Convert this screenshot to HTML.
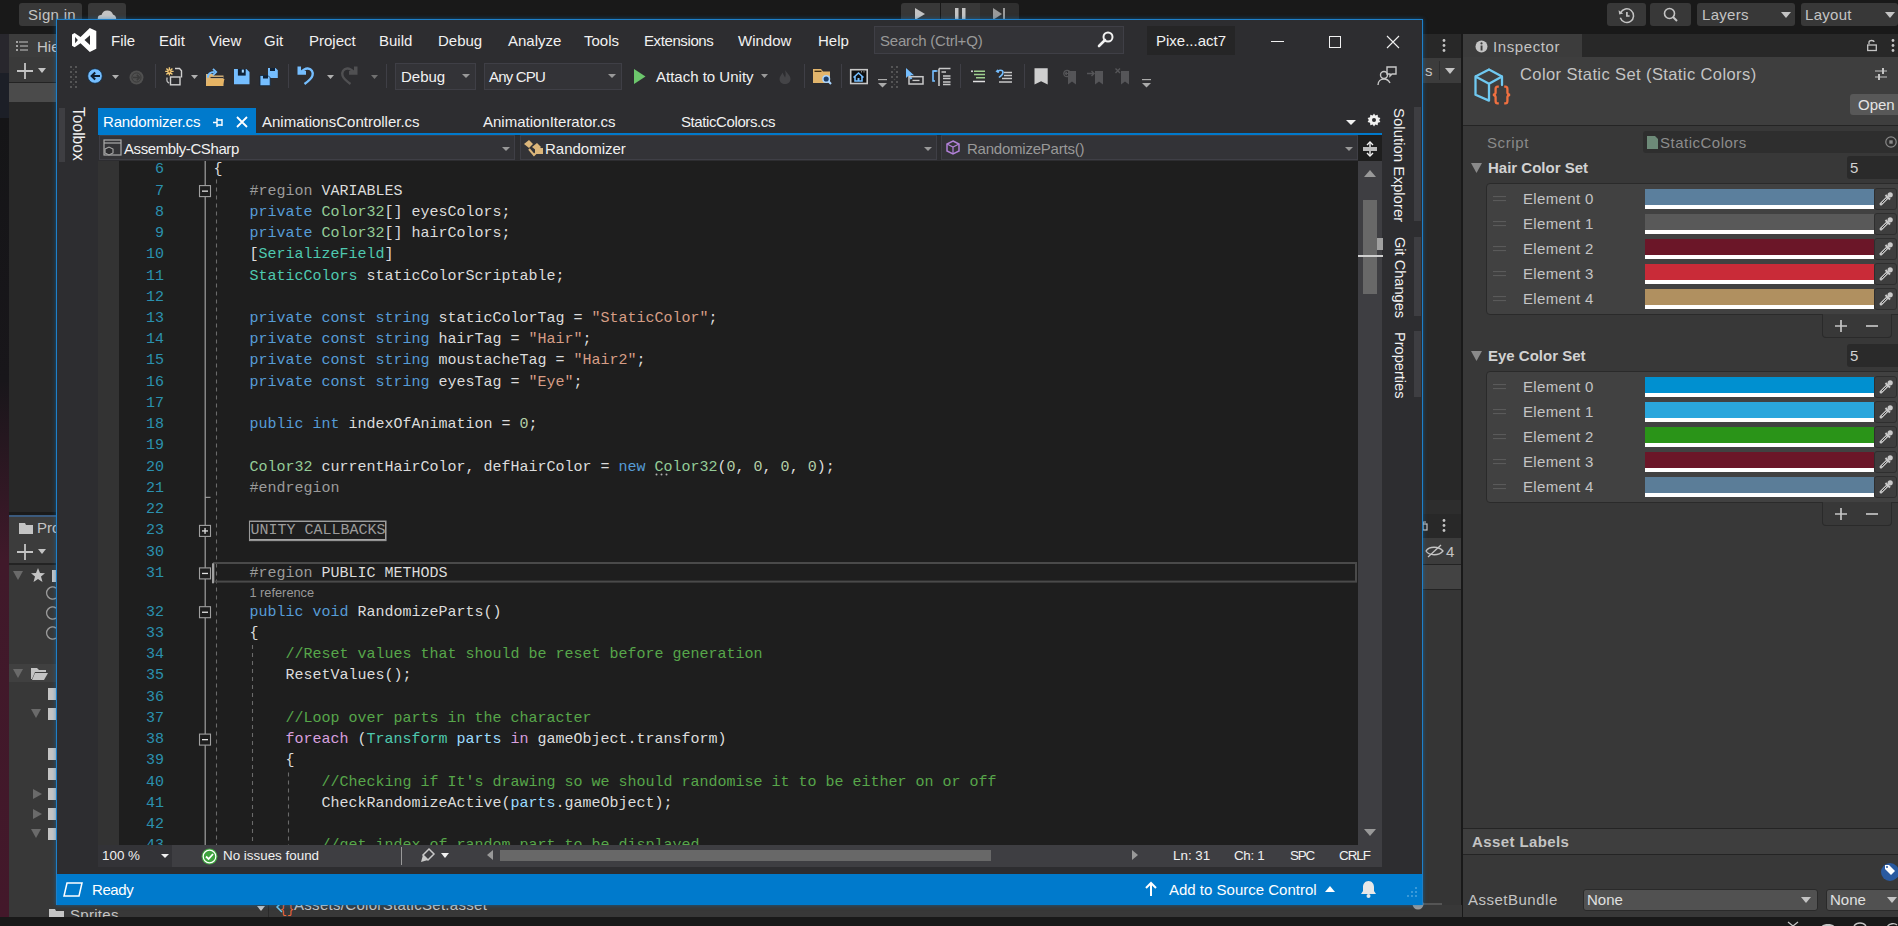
<!DOCTYPE html>
<html><head><meta charset="utf-8">
<style>
*{box-sizing:border-box;margin:0;padding:0}
html,body{width:1898px;height:926px;overflow:hidden;background:#191919;font-family:"Liberation Sans",sans-serif;position:relative}
.abs{position:absolute}
svg.abs{overflow:visible}
.t{position:absolute;white-space:pre;line-height:1.15}
.ln{position:absolute;left:0;width:66px;text-align:right;font-family:"Liberation Mono",monospace;font-size:15px;line-height:21px;color:#2b91af;white-space:pre}
.cl{position:absolute;left:115.4px;font-family:"Liberation Mono",monospace;font-size:15px;line-height:21px;color:#dcdcdc;white-space:pre}
.lens{position:absolute;font-size:12.8px;line-height:17px;color:#999;}
.coll{border:1px solid #a5a5a5;color:#9b9b9b;}
</style></head><body>
<div class="abs" style="left:0px;top:0px;width:1898px;height:34px;background:#191919;"></div><div class="abs" style="left:19px;top:3px;width:63px;height:23px;background:#383838;border-radius:3px"></div><div class="t" style="left:28px;top:6px;font-size:15px;color:#c4c4c4;letter-spacing:0.3px">Sign in</div><div class="abs" style="left:88px;top:3px;width:38px;height:23px;background:#383838;border-radius:3px"></div><svg class="abs" style="left:98px;top:8px" width="19" height="14" viewBox="0 0 19 14"><path d="M3 14 A3.5 3.5 0 0 1 3.5 7 A6 6 0 0 1 15 6.5 A4 4 0 0 1 16 14Z" fill="#c4c4c4"/></svg><div class="abs" style="left:901px;top:3px;width:39px;height:23px;background:#383838;border-radius:3px 0 0 3px"></div><div class="abs" style="left:941px;top:3px;width:39px;height:23px;background:#383838;"></div><div class="abs" style="left:980px;top:3px;width:39px;height:23px;background:#2f2f2f;border-radius:0 3px 3px 0"></div><svg class="abs" style="left:915px;top:8px" width="11" height="12" viewBox="0 0 11 12"><path d="M0 0L10 6L0 12Z" fill="#c4c4c4"/></svg><svg class="abs" style="left:955px;top:8px" width="11" height="12" viewBox="0 0 11 12"><rect x="0" y="0" width="3.5" height="12" fill="#c4c4c4"/><rect x="7" y="0" width="3.5" height="12" fill="#c4c4c4"/></svg><svg class="abs" style="left:993px;top:8px" width="13" height="12" viewBox="0 0 13 12"><path d="M0 0L9 6L0 12Z" fill="#9a9a9a"/><rect x="10" y="0" width="2" height="12" fill="#9a9a9a"/></svg><div class="abs" style="left:1607px;top:3px;width:39px;height:23px;background:#383838;border-radius:3px"></div><svg class="abs" style="left:1618px;top:7px" width="17" height="17" viewBox="0 0 17 17"><path d="M2.6 5.8A6.8 6.8 0 1 1 2.3 10.8" fill="none" stroke="#c4c4c4" stroke-width="1.5"/><path d="M0.6 3.2L1.2 7.6L5.2 6.6Z" fill="#c4c4c4"/><path d="M8.9 5V9H11.6" fill="none" stroke="#c4c4c4" stroke-width="1.7"/></svg><div class="abs" style="left:1650px;top:3px;width:41px;height:23px;background:#383838;border-radius:3px"></div><svg class="abs" style="left:1663px;top:7px" width="16" height="16" viewBox="0 0 16 16"><circle cx="6.5" cy="6.5" r="5" fill="none" stroke="#c4c4c4" stroke-width="1.6"/><path d="M10 10L14 14" stroke="#c4c4c4" stroke-width="2"/></svg><div class="abs" style="left:1697px;top:3px;width:98px;height:23px;background:#383838;border-radius:3px"></div><div class="t" style="left:1702px;top:6px;font-size:15px;color:#c4c4c4;letter-spacing:0.3px">Layers</div><svg class="abs" style="left:1781.0px;top:12.0px" width="10" height="6" viewBox="0 0 10 6"><path d="M0 0H10L5.0 6Z" fill="#c4c4c4"/></svg><div class="abs" style="left:1801px;top:3px;width:97px;height:23px;background:#383838;border-radius:3px"></div><div class="t" style="left:1805px;top:6px;font-size:15px;color:#c4c4c4;letter-spacing:0.3px">Layout</div><svg class="abs" style="left:1885.0px;top:12.0px" width="10" height="6" viewBox="0 0 10 6"><path d="M0 0H10L5.0 6Z" fill="#c4c4c4"/></svg><div class="abs" style="left:0px;top:34px;width:9px;height:883px;background:linear-gradient(#28272d 0px,#28272d 39px,#1c1f27 39px,#1c1f27 84px,#151517 84px,#18161a 346px,#40192a 526px,#43182a 883px);"></div><div class="abs" style="left:9px;top:34px;width:47px;height:481px;background:#282828;"></div><div class="abs" style="left:9px;top:34px;width:47px;height:23px;background:#3c3c3c;"></div><div class="abs" style="left:9px;top:57px;width:47px;height:26px;background:#3a3a3a;border-bottom:1px solid #232323"></div><div class="abs" style="left:9px;top:83px;width:47px;height:19px;background:#4b4b4b;"></div><div class="abs" style="left:9px;top:512px;width:47px;height:405px;background:#383838;"></div><div class="abs" style="left:9px;top:512px;width:47px;height:3px;background:#1a1a1a;"></div><div class="abs" style="left:9px;top:515px;width:47px;height:2px;background:#3b5a7d;"></div><div class="abs" style="left:9px;top:517px;width:47px;height:23px;background:#3c3c3c;"></div><div class="abs" style="left:9px;top:540px;width:47px;height:25px;background:#3c3c3c;border-bottom:2px solid #232323"></div><div class="abs" style="left:9px;top:664px;width:47px;height:18px;background:#404040;"></div><div class="abs" style="left:1423px;top:34px;width:39px;height:883px;background:#353535;"></div><div class="abs" style="left:1423px;top:34px;width:39px;height:24px;background:#282828;"></div><div class="abs" style="left:1423px;top:58px;width:39px;height:25px;background:#3c3c3c;"></div><div class="abs" style="left:1423px;top:83px;width:39px;height:431px;background:#282828;"></div><div class="abs" style="left:1423px;top:500px;width:39px;height:14px;background:#2d2d2d;"></div><div class="abs" style="left:1423px;top:514px;width:39px;height:24px;background:#282828;"></div><div class="abs" style="left:1423px;top:538px;width:39px;height:26px;background:#3c3c3c;"></div><div class="abs" style="left:1423px;top:564px;width:39px;height:26px;background:#434343;border-top:1px solid #232323;border-bottom:1px solid #232323"></div><div class="abs" style="left:1461px;top:34px;width:2px;height:883px;background:#191919;"></div><div class="abs" style="left:1463px;top:34px;width:435px;height:883px;background:#383838;"></div><div class="abs" style="left:1463px;top:34px;width:435px;height:23px;background:#282828;"></div><div class="abs" style="left:1463px;top:34px;width:119px;height:23px;background:#3c3c3c;"></div><div class="abs" style="left:1463px;top:57px;width:435px;height:69px;background:#3e3e3e;border-bottom:1px solid #242424"></div><div class="abs" style="left:1463px;top:828px;width:435px;height:27px;background:#3e3e3e;border-top:1px solid #242424;border-bottom:1px solid #242424"></div><div class="abs" style="left:9px;top:905px;width:1453px;height:12px;background:#383838;"></div><div class="abs" style="left:0px;top:917px;width:1898px;height:9px;background:#191919;"></div><div class="abs" style="left:1418px;top:903px;width:24px;height:2px;background:#555555;"></div><svg class="abs" style="left:1412px;top:898px" width="12" height="12" viewBox="0 0 12 12"><circle cx="6" cy="6" r="5.5" fill="#9a9a9a"/></svg><svg class="abs" style="left:257.0px;top:905.5px" width="8" height="5" viewBox="0 0 8 5"><path d="M0 0H8L4.0 5Z" fill="#c4c4c4"/></svg><div class="abs" style="left:268px;top:905px;width:1px;height:12px;background:#2a2a2a;"></div><svg class="abs" style="left:276px;top:900px" width="16" height="14" viewBox="0 0 16 14"><path d="M6 2L1 7L6 12" fill="none" stroke="#6fc8f0" stroke-width="1.5"/><text x="11" y="13" font-family="Liberation Mono" font-size="12" fill="#f0683a" text-anchor="middle">{}</text></svg><div class="t" style="left:294px;top:896px;font-size:15px;color:#c4c4c4;letter-spacing:0.3px">Assets/ColorStaticSet.asset</div><svg class="abs" style="left:49px;top:908px" width="15" height="12" viewBox="0 0 15 12"><path d="M0 1H6L7 3H15V12H0Z" fill="#c4c4c4"/></svg><div class="t" style="left:70px;top:906px;font-size:15px;color:#c4c4c4;letter-spacing:0.3px">Sprites</div><svg class="abs" style="left:16px;top:41px" width="12" height="10" viewBox="0 0 12 10"><circle cx="1" cy="1" r="1" fill="#c4c4c4"/><path d="M3 1H12M4 5H12M4 9H12" stroke="#c4c4c4" stroke-width="1.2"/><circle cx="1" cy="5" r="1" fill="#c4c4c4"/><circle cx="1" cy="9" r="1" fill="#c4c4c4"/></svg><div class="t" style="left:37px;top:38px;font-size:15px;color:#c4c4c4;">Hie</div><svg class="abs" style="left:17px;top:63px" width="16" height="16" viewBox="0 0 16 16"><path d="M8 0V16M0 8H16" stroke="#c4c4c4" stroke-width="1.8"/></svg><svg class="abs" style="left:38.0px;top:67.5px" width="8" height="5" viewBox="0 0 8 5"><path d="M0 0H8L4.0 5Z" fill="#c4c4c4"/></svg><svg class="abs" style="left:19px;top:522px" width="14" height="12" viewBox="0 0 14 12"><path d="M0 1H6L7 3H14V12H0Z" fill="#c4c4c4"/></svg><div class="t" style="left:37px;top:519px;font-size:15px;color:#c4c4c4;">Pro</div><svg class="abs" style="left:17px;top:544px" width="16" height="16" viewBox="0 0 16 16"><path d="M8 0V16M0 8H16" stroke="#c4c4c4" stroke-width="1.8"/></svg><svg class="abs" style="left:38.0px;top:548.5px" width="8" height="5" viewBox="0 0 8 5"><path d="M0 0H8L4.0 5Z" fill="#c4c4c4"/></svg><svg class="abs" style="left:13px;top:571px" width="10" height="9" viewBox="0 0 10 9"><path d="M0 0H10L5 9Z" fill="#6a6a6a"/></svg><svg class="abs" style="left:31px;top:568px" width="14" height="14" viewBox="0 0 14 14"><path d="M7 0L9 5L14 5.3L10 8.5L11.5 14L7 11L2.5 14L4 8.5L0 5.3L5 5Z" fill="#c4c4c4"/></svg><div class="abs" style="left:52px;top:570px;width:4px;height:12px;background:#c4c4c4;"></div><div class="t" style="left:47px;top:585px;font-size:15px;color:#f1f1f1;"></div><svg class="abs" style="left:47px;top:586px" width="10" height="14" viewBox="0 0 10 14"><path d="M9 2A6 6 0 1 0 9 12" fill="none" stroke="#9a9a9a" stroke-width="1.5"/></svg><div class="t" style="left:47px;top:585px;font-size:15px;color:#f1f1f1;"></div><svg class="abs" style="left:47px;top:606px" width="10" height="14" viewBox="0 0 10 14"><path d="M9 2A6 6 0 1 0 9 12" fill="none" stroke="#9a9a9a" stroke-width="1.5"/></svg><div class="t" style="left:47px;top:585px;font-size:15px;color:#f1f1f1;"></div><svg class="abs" style="left:47px;top:626px" width="10" height="14" viewBox="0 0 10 14"><path d="M9 2A6 6 0 1 0 9 12" fill="none" stroke="#9a9a9a" stroke-width="1.5"/></svg><svg class="abs" style="left:13px;top:669px" width="10" height="9" viewBox="0 0 10 9"><path d="M0 0H10L5 9Z" fill="#6a6a6a"/></svg><svg class="abs" style="left:31px;top:667px" width="17" height="13" viewBox="0 0 17 13"><path d="M0 1H6L8 3H15V5H4L1 12H0Z" fill="#c4c4c4"/><path d="M4 6H17L13 13H1Z" fill="#c4c4c4"/></svg><div class="abs" style="left:48px;top:688px;width:8px;height:12px;background:#c4c4c4;"></div><div class="abs" style="left:48px;top:748px;width:8px;height:12px;background:#c4c4c4;"></div><div class="abs" style="left:48px;top:768px;width:8px;height:12px;background:#c4c4c4;"></div><div class="abs" style="left:48px;top:788px;width:8px;height:12px;background:#c4c4c4;"></div><div class="abs" style="left:48px;top:808px;width:8px;height:12px;background:#c4c4c4;"></div><svg class="abs" style="left:31px;top:709px" width="10" height="9" viewBox="0 0 10 9"><path d="M0 0H10L5 9Z" fill="#6a6a6a"/></svg><div class="abs" style="left:48px;top:708px;width:8px;height:12px;background:#c4c4c4;"></div><svg class="abs" style="left:33px;top:789px" width="9" height="10" viewBox="0 0 9 10"><path d="M0 0L9 5L0 10Z" fill="#6a6a6a"/></svg><svg class="abs" style="left:33px;top:809px" width="9" height="10" viewBox="0 0 9 10"><path d="M0 0L9 5L0 10Z" fill="#6a6a6a"/></svg><svg class="abs" style="left:31px;top:829px" width="10" height="9" viewBox="0 0 10 9"><path d="M0 0H10L5 9Z" fill="#6a6a6a"/></svg><div class="abs" style="left:48px;top:828px;width:8px;height:12px;background:#c4c4c4;"></div><svg class="abs" style="left:1442px;top:39px" width="4" height="13" viewBox="0 0 4 13"><circle cx="2" cy="1.5" r="1.4" fill="#c4c4c4"/><circle cx="2" cy="6.5" r="1.4" fill="#c4c4c4"/><circle cx="2" cy="11.5" r="1.4" fill="#c4c4c4"/></svg><div class="t" style="left:1425px;top:62px;font-size:15px;color:#c4c4c4;">s</div><div class="abs" style="left:1439px;top:61px;width:1px;height:19px;background:#2e2e2e;"></div><svg class="abs" style="left:1445.0px;top:68.0px" width="10" height="6" viewBox="0 0 10 6"><path d="M0 0H10L5.0 6Z" fill="#c4c4c4"/></svg><svg class="abs" style="left:1442px;top:519px" width="4" height="13" viewBox="0 0 4 13"><circle cx="2" cy="1.5" r="1.4" fill="#c4c4c4"/><circle cx="2" cy="6.5" r="1.4" fill="#c4c4c4"/><circle cx="2" cy="11.5" r="1.4" fill="#c4c4c4"/></svg><svg class="abs" style="left:1423px;top:520px" width="5" height="10" viewBox="0 0 5 10"><rect x="0" y="4" width="4" height="6" fill="none" stroke="#c4c4c4" stroke-width="1.2"/><path d="M0 4V2H3" fill="none" stroke="#c4c4c4" stroke-width="1.2"/></svg><svg class="abs" style="left:1425px;top:544px" width="19" height="14" viewBox="0 0 19 14"><path d="M1 7C4 2 14 2 18 7C14 12 4 12 1 7Z" fill="none" stroke="#c4c4c4" stroke-width="1.3"/><path d="M3 13L16 1" stroke="#c4c4c4" stroke-width="1.3"/></svg><div class="t" style="left:1446px;top:543px;font-size:15px;color:#c4c4c4;">4</div><div class="abs" style="left:56px;top:19px;width:1367px;height:886px;background:#2d2d30;border:1px solid #1f7fc8;box-shadow:0 0 4px rgba(0,122,204,0.55)"></div><svg class="abs" style="left:72px;top:28px" width="25" height="25" viewBox="0 0 25 25"><path fill-rule="evenodd" fill="#fff" d="M17.8 0L24.3 2.9V20.8L17.8 24.1L8.5 15.3L2.6 19.3L0 17.8V6.4L2.6 5L8.5 9ZM18 7.2L12.5 11.9L18 17.1ZM3.1 9L5.9 12L3.1 15.3Z"/></svg><div class="t" style="left:111px;top:32px;font-size:15px;color:#f1f1f1;">File</div><div class="t" style="left:159px;top:32px;font-size:15px;color:#f1f1f1;">Edit</div><div class="t" style="left:209px;top:32px;font-size:15px;color:#f1f1f1;">View</div><div class="t" style="left:264px;top:32px;font-size:15px;color:#f1f1f1;">Git</div><div class="t" style="left:309px;top:32px;font-size:15px;color:#f1f1f1;">Project</div><div class="t" style="left:379px;top:32px;font-size:15px;color:#f1f1f1;">Build</div><div class="t" style="left:438px;top:32px;font-size:15px;color:#f1f1f1;">Debug</div><div class="t" style="left:508px;top:32px;font-size:15px;color:#f1f1f1;">Analyze</div><div class="t" style="left:584px;top:32px;font-size:15px;color:#f1f1f1;">Tools</div><div class="t" style="left:644px;top:32px;font-size:15px;color:#f1f1f1;letter-spacing:-0.4px">Extensions</div><div class="t" style="left:738px;top:32px;font-size:15px;color:#f1f1f1;">Window</div><div class="t" style="left:818px;top:32px;font-size:15px;color:#f1f1f1;">Help</div><div class="abs" style="left:874px;top:26px;width:250px;height:28px;background:#333337;border:1px solid #3f3f46"></div><div class="t" style="left:880px;top:32px;font-size:15px;color:#999999;letter-spacing:-0.2px">Search (Ctrl+Q)</div><svg class="abs" style="left:1097px;top:31px" width="17" height="17" viewBox="0 0 17 17"><circle cx="11" cy="6" r="4.5" fill="none" stroke="#f1f1f1" stroke-width="2"/><path d="M8 9L2 15" stroke="#f1f1f1" stroke-width="2.6" stroke-linecap="round"/></svg><div class="abs" style="left:1147px;top:26px;width:88px;height:29px;background:#252526;"></div><div class="t" style="left:1156px;top:32px;font-size:15px;color:#f1f1f1;">Pixe...act7</div><div class="abs" style="left:1271px;top:41px;width:13px;height:1px;background:#f1f1f1;"></div><div class="abs" style="left:1329px;top:36px;width:12px;height:12px;background:transparent;border:1px solid #f1f1f1"></div><svg class="abs" style="left:1387px;top:36px" width="12" height="12" viewBox="0 0 12 12"><path d="M0 0L12 12M12 0L0 12" stroke="#f1f1f1" stroke-width="1.1"/></svg><svg class="abs" style="left:71.4px;top:66.5px" width="6" height="21" viewBox="0 0 6 21"><circle cx="0" cy="0" r="0.9" fill="#6a6a6a"/><circle cx="5" cy="0" r="0.9" fill="#6a6a6a"/><circle cx="0" cy="5" r="0.9" fill="#6a6a6a"/><circle cx="5" cy="5" r="0.9" fill="#6a6a6a"/><circle cx="0" cy="10" r="0.9" fill="#6a6a6a"/><circle cx="5" cy="10" r="0.9" fill="#6a6a6a"/><circle cx="0" cy="15" r="0.9" fill="#6a6a6a"/><circle cx="5" cy="15" r="0.9" fill="#6a6a6a"/><circle cx="0" cy="20" r="0.9" fill="#6a6a6a"/><circle cx="5" cy="20" r="0.9" fill="#6a6a6a"/><circle cx="2.5" cy="2.5" r="0.8" fill="#4a4a4a"/><circle cx="2.5" cy="7.5" r="0.8" fill="#4a4a4a"/><circle cx="2.5" cy="12.5" r="0.8" fill="#4a4a4a"/><circle cx="2.5" cy="17.5" r="0.8" fill="#4a4a4a"/></svg><svg class="abs" style="left:87px;top:68px" width="16" height="16" viewBox="0 0 16 16"><circle cx="8" cy="8" r="7.3" fill="#75beff" stroke="#0b2a45" stroke-width="0.8"/><path d="M13 8H5M8.2 4.6L4.6 8L8.2 11.4" fill="none" stroke="#0f1e2e" stroke-width="2"/></svg><svg class="abs" style="left:112.0px;top:74.7px" width="7" height="4" viewBox="0 0 7 4"><path d="M0 0H7L3.5 4Z" fill="#b0b0b0"/></svg><svg class="abs" style="left:128.5px;top:69.5px" width="15" height="15" viewBox="0 0 15 15"><circle cx="7.5" cy="7.5" r="7" fill="#505050"/><circle cx="7.5" cy="7.5" r="4.6" fill="none" stroke="#3a3a3a" stroke-width="1"/><path d="M4 7.5H10.5M7.8 4.8L10.5 7.5L7.8 10.2" fill="none" stroke="#3a3a3a" stroke-width="1.6"/></svg><div class="abs" style="left:155px;top:64px;width:1px;height:24px;background:#3f3f46;"></div><svg class="abs" style="left:164px;top:66px" width="20" height="20" viewBox="0 0 20 20"><path d="M5.4 1.2V9.6M1.2 5.4H9.6M2.4 2.4L8.4 8.4M8.4 2.4L2.4 8.4" stroke="#f0c878" stroke-width="1.4"/><circle cx="5.4" cy="5.4" r="1" fill="#7a4a10"/><path d="M11 2.5H15.5L17.5 4.8V11.5" fill="none" stroke="#d0d0d0" stroke-width="1.4"/><rect x="6.5" y="11" width="9.5" height="7.8" fill="#2d2d30" stroke="#d0d0d0" stroke-width="1.4"/><path d="M3.2 11.5C2.3 14 3 16.5 5.2 17" fill="none" stroke="#b8b8b8" stroke-width="1.4"/></svg><svg class="abs" style="left:191.0px;top:74.8px" width="7" height="4" viewBox="0 0 7 4"><path d="M0 0H7L3.5 4Z" fill="#b0b0b0"/></svg><svg class="abs" style="left:204px;top:66px" width="22" height="22" viewBox="0 0 22 22"><path d="M2 8H8.5L10 9.5H19.5V20H2Z" fill="#dcb67a"/><path d="M6.5 11.5H19.5" stroke="#2d2d30" stroke-width="1.2"/><path d="M2 20L4.8 13H20.5L18.5 20Z" fill="#e6b464"/><path d="M3.8 11.8C3.8 7.5 6.5 6 10.5 6" fill="none" stroke="#75beff" stroke-width="1.8"/><path d="M9 2.8L12.2 6L9 9.2" fill="none" stroke="#75beff" stroke-width="1.8"/></svg><svg class="abs" style="left:234px;top:69px" width="16" height="16" viewBox="0 0 16 16"><path d="M0 0H12.4L15.5 3V15.3H0Z" fill="#75beff"/><rect x="3.9" y="0" width="7.8" height="6.6" fill="#102236"/><rect x="7.8" y="0.6" width="2.1" height="3" fill="#a8d8ff"/></svg><svg class="abs" style="left:260px;top:68px" width="18" height="18" viewBox="0 0 18 18"><path d="M8 0H15.5L17.8 2.3V10H8Z" fill="#75beff"/><rect x="10" y="0" width="5" height="3" fill="#102236"/><path d="M0 7.5H8L10.2 9.8V17.7H0Z" fill="#75beff" stroke="#102236" stroke-width="0.8"/><rect x="3" y="7.5" width="5" height="3" fill="#102236"/></svg><div class="abs" style="left:288px;top:64px;width:1px;height:24px;background:#3f3f46;"></div><svg class="abs" style="left:296px;top:66px" width="20" height="20" viewBox="0 0 20 20"><path d="M4 7C7 4 9.5 2 12 2.5C15.5 3 17.5 6 16.5 9.5C15.5 13 12 15.5 8.5 18" fill="none" stroke="#75beff" stroke-width="2.4"/><path d="M1.5 0.5H5V5H10V8.8H1.5Z" fill="#75beff"/></svg><svg class="abs" style="left:326.5px;top:74.8px" width="7" height="4" viewBox="0 0 7 4"><path d="M0 0H7L3.5 4Z" fill="#b0b0b0"/></svg><svg class="abs" style="left:341px;top:66px" width="18" height="20" viewBox="0 0 18 20"><path d="M14 7C11 4 8.5 2 6 2.5C2.5 3 0.5 6 1.5 9.5C2.5 13 6 15.5 9.5 18" fill="none" stroke="#505052" stroke-width="2.4"/><path d="M16.5 0.5H13V5H8V8.8H16.5Z" fill="#505052"/></svg><svg class="abs" style="left:370.5px;top:74.8px" width="7" height="4" viewBox="0 0 7 4"><path d="M0 0H7L3.5 4Z" fill="#707070"/></svg><div class="abs" style="left:386px;top:64px;width:1px;height:24px;background:#3f3f46;"></div><div class="abs" style="left:395px;top:63px;width:81px;height:27px;background:#333337;border:1px solid #3f3f46"></div><div class="t" style="left:401px;top:68px;font-size:15px;color:#f1f1f1;">Debug</div><svg class="abs" style="left:462.0px;top:74.0px" width="8" height="4" viewBox="0 0 8 4"><path d="M0 0H8L4.0 4Z" fill="#999"/></svg><div class="abs" style="left:484px;top:63px;width:138px;height:27px;background:#333337;border:1px solid #3f3f46"></div><div class="t" style="left:489px;top:68px;font-size:15px;color:#f1f1f1;letter-spacing:-0.8px">Any CPU</div><svg class="abs" style="left:608.0px;top:74.0px" width="8" height="4" viewBox="0 0 8 4"><path d="M0 0H8L4.0 4Z" fill="#999"/></svg><svg class="abs" style="left:634px;top:69px" width="12" height="15" viewBox="0 0 12 15"><path d="M0 0L11.5 7.5L0 15Z" fill="#6cc66c"/></svg><div class="t" style="left:656px;top:68px;font-size:15px;color:#f1f1f1;">Attach to Unity</div><svg class="abs" style="left:760.5px;top:74.0px" width="7" height="4" viewBox="0 0 7 4"><path d="M0 0H7L3.5 4Z" fill="#999"/></svg><svg class="abs" style="left:779px;top:70px" width="12" height="14" viewBox="0 0 12 14"><path d="M6 0C7.5 3 11.5 5 11.5 9C11.5 12 9 14 6 14C3 14 0.5 12 0.5 9C0.5 6.5 2.5 5 3.5 2.5C4.5 5 5.5 6 6 7.5C7 6 6.8 3 6 0Z" fill="#444447"/></svg><div class="abs" style="left:804px;top:64px;width:1px;height:24px;background:#3f3f46;"></div><svg class="abs" style="left:812px;top:68px" width="20" height="17" viewBox="0 0 20 17"><path d="M1 1H9L11 3.5H18V15H1Z" fill="#e2b56c"/><path d="M2.5 3.3H9.5" stroke="#3a2a10" stroke-width="1.3"/><circle cx="14.2" cy="11" r="3.3" fill="#1c3c66" stroke="#a8d4ff" stroke-width="1.5"/><path d="M16.5 13.3L19 16" stroke="#a8d4ff" stroke-width="2"/></svg><div class="abs" style="left:841px;top:64px;width:1px;height:24px;background:#3f3f46;"></div><svg class="abs" style="left:849px;top:68px" width="20" height="17" viewBox="0 0 20 17"><rect x="1.7" y="1.7" width="16.5" height="13.8" fill="#101010" stroke="#c8c8c8" stroke-width="1.6"/><path d="M4.5 9.5L9.5 5L14.5 9.5M6 8.5V13H13V8.5" fill="none" stroke="#75beff" stroke-width="1.6"/><rect x="8.5" y="10" width="2" height="3" fill="#75beff"/><circle cx="12.5" cy="3.8" r="0.6" fill="#c8c8c8"/><circle cx="15" cy="3.8" r="0.6" fill="#c8c8c8"/></svg><svg class="abs" style="left:877.5px;top:78.5px" width="9" height="8.5" viewBox="0 0 9 8.5"><path d="M0 0.6H9" stroke="#aaa" stroke-width="1.2"/><path d="M0 4L4.5 8.5L9 4Z" fill="#aaa"/></svg><svg class="abs" style="left:891.5px;top:66.5px" width="6" height="21" viewBox="0 0 6 21"><circle cx="0" cy="0" r="0.9" fill="#6a6a6a"/><circle cx="5" cy="0" r="0.9" fill="#6a6a6a"/><circle cx="0" cy="5" r="0.9" fill="#6a6a6a"/><circle cx="5" cy="5" r="0.9" fill="#6a6a6a"/><circle cx="0" cy="10" r="0.9" fill="#6a6a6a"/><circle cx="5" cy="10" r="0.9" fill="#6a6a6a"/><circle cx="0" cy="15" r="0.9" fill="#6a6a6a"/><circle cx="5" cy="15" r="0.9" fill="#6a6a6a"/><circle cx="0" cy="20" r="0.9" fill="#6a6a6a"/><circle cx="5" cy="20" r="0.9" fill="#6a6a6a"/><circle cx="2.5" cy="2.5" r="0.8" fill="#4a4a4a"/><circle cx="2.5" cy="7.5" r="0.8" fill="#4a4a4a"/><circle cx="2.5" cy="12.5" r="0.8" fill="#4a4a4a"/><circle cx="2.5" cy="17.5" r="0.8" fill="#4a4a4a"/></svg><svg class="abs" style="left:905px;top:67px" width="19" height="18" viewBox="0 0 19 18"><path d="M1 1V11L3.5 8.8L5.5 12.5L7.3 11.6L5.5 8.2H9Z" fill="#75beff"/><rect x="4" y="9.7" width="14" height="7.3" fill="none" stroke="#c8c8c8" stroke-width="1.5"/><rect x="7.5" y="12.8" width="7" height="1.3" fill="#c8c8c8"/></svg><svg class="abs" style="left:931px;top:67px" width="20" height="20" viewBox="0 0 20 20"><path d="M5 4H2V14H4" fill="none" stroke="#75beff" stroke-width="1.6"/><path d="M2.5 4H6.5" stroke="#75beff" stroke-width="1.6"/><path d="M8 1.5V19" stroke="#c8c8c8" stroke-width="1.6"/><path d="M8 1.5H19.5M10.5 5H15M12 9H19.5M12 11.5H19.5M12 15H19.5M12 17.5H19.5" stroke="#c8c8c8" stroke-width="1.3"/></svg><div class="abs" style="left:960px;top:64px;width:1px;height:24px;background:#3f3f46;"></div><svg class="abs" style="left:971px;top:70px" width="15" height="13" viewBox="0 0 15 13"><path d="M3 1.2H14M3 4.5H14M5 7.8H14" stroke="#9fcf8f" stroke-width="1.5"/><path d="M2 11.5H14" stroke="#e0e0e0" stroke-width="1.5"/><circle cx="1" cy="1.2" r="1" fill="#e0e0e0"/></svg><svg class="abs" style="left:995px;top:69px" width="18" height="15" viewBox="0 0 18 15"><path d="M2.5 3.5C3 0.5 8 0.5 8 3.5C8 6 5.5 7 4 8.5" fill="none" stroke="#75beff" stroke-width="1.7"/><path d="M0.5 2.5L2.8 0.3L4 4Z" fill="#75beff"/><path d="M9 3.5H17M9 6.5H17M7 9.5H17M4 13H17" stroke="#c8c8c8" stroke-width="1.4"/></svg><div class="abs" style="left:1024px;top:64px;width:1px;height:24px;background:#3f3f46;"></div><svg class="abs" style="left:1034px;top:68px" width="15" height="17" viewBox="0 0 15 17"><path d="M0.5 0.3H13.7V16.5L7.1 13.3L0.5 16.5Z" fill="#cfcfcf"/></svg><svg class="abs" style="left:1063px;top:69px" width="14" height="16" viewBox="0 0 14 16"><path d="M5 2H13V15.5L9 12.5L5 15.5Z" fill="#555558"/><circle cx="4" cy="4.5" r="3.2" fill="none" stroke="#555558" stroke-width="1.3"/><path d="M6 4.5H2.3M3.8 3L2.3 4.5L3.8 6" fill="none" stroke="#555558" stroke-width="1.1"/></svg><svg class="abs" style="left:1087px;top:69px" width="18" height="16" viewBox="0 0 18 16"><path d="M8 2H16V15.5L12 12.5L8 15.5Z" fill="#555558"/><path d="M0 4.5H7M4.5 2L7 4.5L4.5 7" fill="none" stroke="#555558" stroke-width="1.4"/></svg><svg class="abs" style="left:1115px;top:68px" width="17" height="17" viewBox="0 0 17 17"><path d="M6 3H14V16.5L10 13.5L6 16.5Z" fill="#555558"/><path d="M0.5 0.5L5 5M5 0.5L0.5 5" stroke="#555558" stroke-width="1.4"/></svg><svg class="abs" style="left:1141.5px;top:78.5px" width="9" height="8.5" viewBox="0 0 9 8.5"><path d="M0 0.6H9" stroke="#aaa" stroke-width="1.2"/><path d="M0 4L4.5 8.5L9 4Z" fill="#aaa"/></svg><svg class="abs" style="left:1377px;top:66px" width="20" height="20" viewBox="0 0 20 20"><circle cx="7" cy="9" r="3.5" fill="none" stroke="#c8c8c8" stroke-width="1.4"/><path d="M1 19C1 15 4 13 7 13C10 13 12 15 13 17" fill="none" stroke="#c8c8c8" stroke-width="1.4"/><path d="M10 1H19V8H15L13 10V8H10Z" fill="none" stroke="#c8c8c8" stroke-width="1.4"/></svg><div class="abs" style="left:59px;top:108px;width:6px;height:54px;background:#3e3e42;"></div><div class="t" style="left:67px;top:107px;font-size:15.6px;color:#f1f1f1;transform-origin:0 0;transform:translate(20px,0) rotate(90deg)">Toolbox</div><div class="abs" style="left:98px;top:108px;width:158px;height:25px;background:#007acc;"></div><div class="t" style="left:103px;top:113px;font-size:15px;color:#ffffff;letter-spacing:-0.15px">Randomizer.cs</div><svg class="abs" style="left:212px;top:117px" width="12" height="11" viewBox="0 0 12 11"><path d="M1 5.5H5M5 1V10M5 3H10M5 8H10M10 2V9" fill="none" stroke="#fff" stroke-width="1.4"/></svg><svg class="abs" style="left:236px;top:116px" width="12" height="12" viewBox="0 0 12 12"><path d="M1 1L11 11M11 1L1 11" stroke="#fff" stroke-width="1.8"/></svg><div class="t" style="left:262px;top:113px;font-size:15px;color:#f1f1f1;">AnimationsController.cs</div><div class="t" style="left:483px;top:113px;font-size:15px;color:#f1f1f1;">AnimationIterator.cs</div><div class="t" style="left:681px;top:113px;font-size:15px;color:#f1f1f1;letter-spacing:-0.4px">StaticColors.cs</div><svg class="abs" style="left:1346.0px;top:119.5px" width="10" height="5" viewBox="0 0 10 5"><path d="M0 0H10L5.0 5Z" fill="#f1f1f1"/></svg><svg class="abs" style="left:1367px;top:113px" width="14" height="14" viewBox="0 0 14 14"><path d="M7 0.5L8.3 2.6L10.7 1.8L10.9 4.3L13.4 4.9L12.2 7L13.4 9.1L10.9 9.7L10.7 12.2L8.3 11.4L7 13.5L5.7 11.4L3.3 12.2L3.1 9.7L0.6 9.1L1.8 7L0.6 4.9L3.1 4.3L3.3 1.8L5.7 2.6Z" fill="#f1f1f1"/><circle cx="7" cy="7" r="2" fill="#2d2d30"/></svg><div class="abs" style="left:98px;top:133px;width:1284px;height:2px;background:#007acc;"></div><div class="abs" style="left:98px;top:135px;width:1260px;height:26px;background:#2d2d30;"></div><div class="abs" style="left:99px;top:135px;width:416px;height:25px;background:#333337;border:1px solid #3f3f46"></div><svg class="abs" style="left:103px;top:139px" width="19" height="18" viewBox="0 0 19 18"><rect x="1" y="1" width="17" height="15" fill="none" stroke="#aaa" stroke-width="1.2"/><path d="M1 4H18" stroke="#aaa" stroke-width="1.2"/><path d="M2 10L6 8L10 10V14L6 16L2 14Z" fill="#2d2d30" stroke="#aaa" stroke-width="1.1"/></svg><div class="t" style="left:124px;top:140px;font-size:15px;color:#f1f1f1;letter-spacing:-0.4px">Assembly-CSharp</div><svg class="abs" style="left:502.0px;top:147.0px" width="8" height="4" viewBox="0 0 8 4"><path d="M0 0H8L4.0 4Z" fill="#999"/></svg><div class="abs" style="left:520px;top:135px;width:417px;height:25px;background:#333337;border:1px solid #3f3f46"></div><svg class="abs" style="left:523px;top:139px" width="22" height="18" viewBox="0 0 22 18"><path d="M1 5L6 1L10 5L6 9Z" fill="#dcb67a"/><path d="M9 8L14 4L18 8L14 12Z" fill="#dcb67a"/><path d="M6 10L11 16L16 11" fill="none" stroke="#dcb67a" stroke-width="2"/><rect x="12" y="9" width="8" height="6" fill="#dcb67a"/></svg><div class="t" style="left:545px;top:140px;font-size:15px;color:#f1f1f1;">Randomizer</div><svg class="abs" style="left:924.0px;top:147.0px" width="8" height="4" viewBox="0 0 8 4"><path d="M0 0H8L4.0 4Z" fill="#999"/></svg><div class="abs" style="left:941px;top:135px;width:417px;height:25px;background:#333337;border:1px solid #3f3f46"></div><svg class="abs" style="left:946px;top:140px" width="14" height="15" viewBox="0 0 14 15"><path d="M7 1L13 4V11L7 14L1 11V4Z" fill="none" stroke="#b180d7" stroke-width="1.5"/><path d="M1 4L7 7L13 4M7 7V14" fill="none" stroke="#b180d7" stroke-width="1.2"/></svg><div class="t" style="left:967px;top:140px;font-size:15px;color:#999999;letter-spacing:-0.23px">RandomizeParts()</div><svg class="abs" style="left:1345.0px;top:147.0px" width="8" height="4" viewBox="0 0 8 4"><path d="M0 0H8L4.0 4Z" fill="#999"/></svg><div class="abs" style="left:1358px;top:135px;width:24px;height:26px;background:#1e1e1e;"></div><svg class="abs" style="left:1362px;top:141px" width="16" height="16" viewBox="0 0 16 16"><path d="M1 7H15M1 9H15" stroke="#f1f1f1" stroke-width="1.4"/><path d="M8 1V6M8 10V15" stroke="#f1f1f1" stroke-width="1.4"/><path d="M5 4L8 1L11 4M5 12L8 15L11 12" fill="none" stroke="#f1f1f1" stroke-width="1.4"/></svg><div class="abs" style="left:98px;top:161px;width:1260px;height:684px;background:#1e1e1e;overflow:hidden"><div class="abs" style="left:0;top:0;width:21px;height:684px;background:#333333"></div><div class="ln" style="top:-1.7px">6</div>
<div class="cl" style="top:-1.7px"><span style="color:#dcdcdc">{</span></div>
<div class="ln" style="top:19.5px">7</div>
<div class="cl" style="top:19.5px"><span style="color:#dcdcdc">    </span><span style="color:#9b9b9b">#region</span><span style="color:#dcdcdc"> VARIABLES</span></div>
<div class="ln" style="top:40.8px">8</div>
<div class="cl" style="top:40.8px"><span style="color:#dcdcdc">    </span><span style="color:#569cd6">private</span><span style="color:#dcdcdc"> </span><span style="color:#94cc98">Color32</span><span style="color:#dcdcdc">[] eyesColors;</span></div>
<div class="ln" style="top:62.0px">9</div>
<div class="cl" style="top:62.0px"><span style="color:#dcdcdc">    </span><span style="color:#569cd6">private</span><span style="color:#dcdcdc"> </span><span style="color:#94cc98">Color32</span><span style="color:#dcdcdc">[] hairColors;</span></div>
<div class="ln" style="top:83.2px">10</div>
<div class="cl" style="top:83.2px"><span style="color:#dcdcdc">    [</span><span style="color:#4ec9b0">SerializeField</span><span style="color:#dcdcdc">]</span></div>
<div class="ln" style="top:104.5px">11</div>
<div class="cl" style="top:104.5px"><span style="color:#dcdcdc">    </span><span style="color:#4ec9b0">StaticColors</span><span style="color:#dcdcdc"> staticColorScriptable;</span></div>
<div class="ln" style="top:125.7px">12</div>
<div class="ln" style="top:146.9px">13</div>
<div class="cl" style="top:146.9px"><span style="color:#dcdcdc">    </span><span style="color:#569cd6">private const string</span><span style="color:#dcdcdc"> staticColorTag = </span><span style="color:#d69d85">&quot;StaticColor&quot;</span><span style="color:#dcdcdc">;</span></div>
<div class="ln" style="top:168.2px">14</div>
<div class="cl" style="top:168.2px"><span style="color:#dcdcdc">    </span><span style="color:#569cd6">private const string</span><span style="color:#dcdcdc"> hairTag = </span><span style="color:#d69d85">&quot;Hair&quot;</span><span style="color:#dcdcdc">;</span></div>
<div class="ln" style="top:189.4px">15</div>
<div class="cl" style="top:189.4px"><span style="color:#dcdcdc">    </span><span style="color:#569cd6">private const string</span><span style="color:#dcdcdc"> moustacheTag = </span><span style="color:#d69d85">&quot;Hair2&quot;</span><span style="color:#dcdcdc">;</span></div>
<div class="ln" style="top:210.7px">16</div>
<div class="cl" style="top:210.7px"><span style="color:#dcdcdc">    </span><span style="color:#569cd6">private const string</span><span style="color:#dcdcdc"> eyesTag = </span><span style="color:#d69d85">&quot;Eye&quot;</span><span style="color:#dcdcdc">;</span></div>
<div class="ln" style="top:231.9px">17</div>
<div class="ln" style="top:253.1px">18</div>
<div class="cl" style="top:253.1px"><span style="color:#dcdcdc">    </span><span style="color:#569cd6">public int</span><span style="color:#dcdcdc"> indexOfAnimation = </span><span style="color:#b5cea8">0</span><span style="color:#dcdcdc">;</span></div>
<div class="ln" style="top:274.4px">19</div>
<div class="ln" style="top:295.6px">20</div>
<div class="cl" style="top:295.6px"><span style="color:#dcdcdc">    </span><span style="color:#94cc98">Color32</span><span style="color:#dcdcdc"> currentHairColor, defHairColor = </span><span style="color:#569cd6">new</span><span style="color:#dcdcdc"> </span><span style="color:#94cc98">Color32</span><span style="color:#dcdcdc">(</span><span style="color:#b5cea8">0</span><span style="color:#dcdcdc">, </span><span style="color:#b5cea8">0</span><span style="color:#dcdcdc">, </span><span style="color:#b5cea8">0</span><span style="color:#dcdcdc">, </span><span style="color:#b5cea8">0</span><span style="color:#dcdcdc">);</span></div>
<div class="ln" style="top:316.8px">21</div>
<div class="cl" style="top:316.8px"><span style="color:#dcdcdc">    </span><span style="color:#9b9b9b">#endregion</span></div>
<div class="ln" style="top:338.1px">22</div>
<div class="ln" style="top:359.3px">23</div>
<div class="cl" style="top:359.3px">    <span class="coll">UNITY CALLBACKS</span></div>
<div class="ln" style="top:380.5px">30</div>
<div class="ln" style="top:401.8px">31</div>
<div class="cl" style="top:401.8px"><span style="color:#dcdcdc">    </span><span style="color:#9b9b9b">#region</span><span style="color:#dcdcdc"> PUBLIC METHODS</span></div>
<div class="lens" style="left:151.4px;top:423.0px">1 reference</div>
<div class="ln" style="top:440.6px">32</div>
<div class="cl" style="top:440.6px"><span style="color:#dcdcdc">    </span><span style="color:#569cd6">public void</span><span style="color:#dcdcdc"> RandomizeParts()</span></div>
<div class="ln" style="top:461.8px">33</div>
<div class="cl" style="top:461.8px"><span style="color:#dcdcdc">    {</span></div>
<div class="ln" style="top:483.1px">34</div>
<div class="cl" style="top:483.1px"><span style="color:#dcdcdc">        </span><span style="color:#57a64a">//Reset values that should be reset before generation</span></div>
<div class="ln" style="top:504.3px">35</div>
<div class="cl" style="top:504.3px"><span style="color:#dcdcdc">        ResetValues();</span></div>
<div class="ln" style="top:525.5px">36</div>
<div class="ln" style="top:546.8px">37</div>
<div class="cl" style="top:546.8px"><span style="color:#dcdcdc">        </span><span style="color:#57a64a">//Loop over parts in the character</span></div>
<div class="ln" style="top:568.0px">38</div>
<div class="cl" style="top:568.0px"><span style="color:#dcdcdc">        </span><span style="color:#d8a0df">foreach</span><span style="color:#dcdcdc"> (</span><span style="color:#4ec9b0">Transform</span><span style="color:#dcdcdc"> </span><span style="color:#9cdcfe">parts</span><span style="color:#dcdcdc"> </span><span style="color:#d8a0df">in</span><span style="color:#dcdcdc"> gameObject.transform)</span></div>
<div class="ln" style="top:589.2px">39</div>
<div class="cl" style="top:589.2px"><span style="color:#dcdcdc">        {</span></div>
<div class="ln" style="top:610.5px">40</div>
<div class="cl" style="top:610.5px"><span style="color:#dcdcdc">            </span><span style="color:#57a64a">//Checking if It&#x27;s drawing so we should randomise it to be either on or off</span></div>
<div class="ln" style="top:631.7px">41</div>
<div class="cl" style="top:631.7px"><span style="color:#dcdcdc">            CheckRandomizeActive(</span><span style="color:#9cdcfe">parts</span><span style="color:#dcdcdc">.gameObject);</span></div>
<div class="ln" style="top:653.0px">42</div>
<div class="ln" style="top:674.2px">43</div>
<div class="cl" style="top:674.2px"><span style="color:#dcdcdc">            </span><span style="color:#57a64a">//get index of random part to be displayed</span></div></div><svg class="abs" style="left:98px;top:161px" width="1260" height="684" viewBox="98 161 1260 684"><rect x="204.6" y="161.0" width="1.2" height="24.6" fill="#a0a0a0"/><rect x="204.6" y="196.6" width="1.2" height="328.8" fill="#a0a0a0"/><rect x="204.6" y="536.4" width="1.2" height="31.5" fill="#a0a0a0"/><rect x="204.6" y="578.9" width="1.2" height="27.8" fill="#a0a0a0"/><rect x="204.6" y="617.7" width="1.2" height="116.4" fill="#a0a0a0"/><rect x="204.6" y="745.1" width="1.2" height="99.9" fill="#a0a0a0"/><rect x="199.5" y="185.6" width="11" height="11" fill="#1e1e1e" stroke="#a0a0a0" stroke-width="1.1"/><rect x="202" y="190.5" width="6" height="1.3" fill="#e0e0e0"/><rect x="199.5" y="525.4" width="11" height="11" fill="#1e1e1e" stroke="#a0a0a0" stroke-width="1.1"/><rect x="202" y="530.3" width="6" height="1.3" fill="#e0e0e0"/><rect x="204.4" y="527.9" width="1.3" height="6" fill="#e0e0e0"/><rect x="199.5" y="567.9" width="11" height="11" fill="#1e1e1e" stroke="#a0a0a0" stroke-width="1.1"/><rect x="202" y="572.8" width="6" height="1.3" fill="#e0e0e0"/><rect x="199.5" y="606.7" width="11" height="11" fill="#1e1e1e" stroke="#a0a0a0" stroke-width="1.1"/><rect x="202" y="611.6" width="6" height="1.3" fill="#e0e0e0"/><rect x="199.5" y="734.1" width="11" height="11" fill="#1e1e1e" stroke="#a0a0a0" stroke-width="1.1"/><rect x="202" y="739.0" width="6" height="1.3" fill="#e0e0e0"/><rect x="205" y="496.8" width="5.5" height="1.1" fill="#a0a0a0"/><path d="M216.5 179.5V845.0" stroke="#6a6a6a" stroke-width="1.1" stroke-dasharray="4 4"/><path d="M252.5 645.1V845.0" stroke="#6a6a6a" stroke-width="1.1" stroke-dasharray="4 4"/><path d="M288.5 772.5V845.0" stroke="#6a6a6a" stroke-width="1.1" stroke-dasharray="4 4"/><rect x="249.5" y="521.1" width="136.5" height="19.5" fill="none" stroke="#9a9a9a" stroke-width="1.1"/><circle cx="656.5" cy="474.6" r="1" fill="#b0b0b0"/><circle cx="661.5" cy="474.6" r="1" fill="#b0b0b0"/><circle cx="666.5" cy="474.6" r="1" fill="#b0b0b0"/><rect x="214" y="563.0" width="1142" height="18.6" fill="none" stroke="#4a4a4a" stroke-width="2"/><rect x="212" y="563.3" width="2" height="20" fill="#a0a0a0"/></svg><div class="abs" style="left:1358px;top:161px;width:24px;height:684px;background:#3e3e42;"></div><svg class="abs" style="left:1364px;top:170px" width="12" height="7" viewBox="0 0 12 7"><path d="M0 7L6 0L12 7Z" fill="#999"/></svg><svg class="abs" style="left:1364px;top:829px" width="12" height="7" viewBox="0 0 12 7"><path d="M0 0L6 7L12 0Z" fill="#999"/></svg><div class="abs" style="left:1363px;top:200px;width:14px;height:94px;background:#686868;"></div><div class="abs" style="left:1377px;top:238px;width:6px;height:12px;background:#a0a0a0;"></div><div class="abs" style="left:1358px;top:255px;width:25px;height:2px;background:#d0d0d0;"></div><div class="abs" style="left:1383px;top:100px;width:39px;height:805px;background:#2d2d30;"></div><div class="abs" style="left:1414px;top:107px;width:7px;height:114px;background:#3e3e42;"></div><div class="abs" style="left:1414px;top:237px;width:7px;height:79px;background:#3e3e42;"></div><div class="abs" style="left:1414px;top:331px;width:7px;height:66px;background:#3e3e42;"></div><div class="t" style="left:1388px;top:108px;font-size:15px;color:#f1f1f1;transform-origin:0 0;transform:translate(20px,0) rotate(90deg)">Solution Explorer</div><div class="t" style="left:1388px;top:237px;font-size:14.6px;color:#f1f1f1;transform-origin:0 0;transform:translate(20px,0) rotate(90deg)">Git Changes</div><div class="t" style="left:1388px;top:332px;font-size:14.6px;color:#f1f1f1;transform-origin:0 0;transform:translate(20px,0) rotate(90deg)">Properties</div><div class="abs" style="left:98px;top:845px;width:1284px;height:22px;background:#3e3e42;"></div><div class="abs" style="left:98px;top:845px;width:74px;height:22px;background:#333337;"></div><div class="t" style="left:102px;top:848px;font-size:13.4px;color:#f1f1f1;">100 %</div><svg class="abs" style="left:161.0px;top:854.0px" width="8" height="4" viewBox="0 0 8 4"><path d="M0 0H8L4.0 4Z" fill="#f1f1f1"/></svg><svg class="abs" style="left:201px;top:848px" width="17" height="17" viewBox="0 0 17 17"><circle cx="8.5" cy="8.5" r="8" fill="#3ea33e"/><circle cx="8.5" cy="8.5" r="6.3" fill="none" stroke="#fff" stroke-width="1.2"/><path d="M5 8.5L7.6 11L12 6" fill="none" stroke="#fff" stroke-width="1.8"/></svg><div class="t" style="left:223px;top:848px;font-size:13.4px;color:#f1f1f1;">No issues found</div><div class="abs" style="left:401px;top:847px;width:1px;height:18px;background:#999;"></div><svg class="abs" style="left:420px;top:848px" width="15" height="15" viewBox="0 0 15 15"><path d="M9 1L14 6L8 12L3 7Z" fill="none" stroke="#c8c8c8" stroke-width="1.5"/><path d="M3 7L1 14L8 12" fill="#c8c8c8"/></svg><svg class="abs" style="left:441.0px;top:852.5px" width="8" height="5" viewBox="0 0 8 5"><path d="M0 0H8L4.0 5Z" fill="#f1f1f1"/></svg><svg class="abs" style="left:487px;top:850px" width="6" height="10" viewBox="0 0 6 10"><path d="M6 0L0 5L6 10Z" fill="#999"/></svg><div class="abs" style="left:500px;top:850px;width:491px;height:11px;background:#686868;"></div><svg class="abs" style="left:1132px;top:850px" width="6" height="10" viewBox="0 0 6 10"><path d="M0 0L6 5L0 10Z" fill="#999"/></svg><div class="t" style="left:1173px;top:848px;font-size:13.4px;color:#f1f1f1;">Ln: 31</div><div class="t" style="left:1234px;top:848px;font-size:13.4px;color:#f1f1f1;letter-spacing:-0.3px">Ch: 1</div><div class="t" style="left:1290px;top:848px;font-size:13.4px;color:#f1f1f1;letter-spacing:-1.2px">SPC</div><div class="t" style="left:1339px;top:848px;font-size:13.4px;color:#f1f1f1;letter-spacing:-1.0px">CRLF</div><div class="abs" style="left:57px;top:874px;width:1365px;height:31px;background:#007acc;"></div><svg class="abs" style="left:63px;top:882px" width="20" height="15" viewBox="0 0 20 15"><path d="M4 1H19L16 14H1Z" fill="none" stroke="#fff" stroke-width="1.5"/></svg><div class="t" style="left:92px;top:881px;font-size:15px;color:#ffffff;letter-spacing:-0.4px">Ready</div><svg class="abs" style="left:1145px;top:882px" width="12" height="14" viewBox="0 0 12 14"><path d="M6 14V2M1 6L6 1L11 6" fill="none" stroke="#fff" stroke-width="2"/></svg><div class="t" style="left:1169px;top:881px;font-size:15px;color:#ffffff;">Add to Source Control</div><svg class="abs" style="left:1325px;top:886px" width="10" height="6" viewBox="0 0 10 6"><path d="M0 6L5 0L10 6Z" fill="#fff"/></svg><svg class="abs" style="left:1360px;top:880px" width="17" height="18" viewBox="0 0 17 18"><path d="M8.5 1C12 1 14 4 14 7V11L16 14H1L3 11V7C3 4 5 1 8.5 1Z" fill="#e8e8e8"/><circle cx="8.5" cy="16" r="2" fill="#e8e8e8"/></svg><svg class="abs" style="left:1406px;top:886px" width="12" height="12" viewBox="0 0 12 12"><circle cx="10" cy="2" r="0.7" fill="#9fd0f0"/><circle cx="10" cy="6" r="0.7" fill="#9fd0f0"/><circle cx="10" cy="10" r="0.7" fill="#9fd0f0"/><circle cx="6" cy="6" r="0.7" fill="#9fd0f0"/><circle cx="6" cy="10" r="0.7" fill="#9fd0f0"/><circle cx="2" cy="10" r="0.7" fill="#9fd0f0"/></svg><svg class="abs" style="left:1475px;top:40px" width="13" height="13" viewBox="0 0 13 13"><circle cx="6.5" cy="6.5" r="6" fill="#c4c4c4"/><rect x="5.6" y="5.5" width="1.9" height="5" fill="#3c3c3c"/><circle cx="6.5" cy="3.4" r="1.1" fill="#3c3c3c"/></svg><div class="t" style="left:1493px;top:38px;font-size:15px;color:#c4c4c4;letter-spacing:0.6px">Inspector</div><svg class="abs" style="left:1867px;top:39px" width="10" height="12" viewBox="0 0 10 12"><path d="M2 5V3C2 1 7 1 7 3" fill="none" stroke="#c4c4c4" stroke-width="1.3"/><rect x="0.7" y="6" width="8.6" height="5.5" fill="none" stroke="#c4c4c4" stroke-width="1.3"/></svg><svg class="abs" style="left:1891px;top:39px" width="4" height="13" viewBox="0 0 4 13"><circle cx="2" cy="1.5" r="1.4" fill="#c4c4c4"/><circle cx="2" cy="6.5" r="1.4" fill="#c4c4c4"/><circle cx="2" cy="11.5" r="1.4" fill="#c4c4c4"/></svg><svg class="abs" style="left:1474px;top:68px" width="38" height="37" viewBox="0 0 38 37"><path d="M15 1.4L28 8.4V17M15 1.4L1.5 8.4V26.8L15 32.6M1.5 8.4L15 15.8L28 8.4M15 15.8V32.6" fill="none" stroke="#6fc8f0" stroke-width="2.3" stroke-linejoin="round" stroke-linecap="round"/><path d="M24.8 18.6H23.6C22.1 18.6 21.6 19.4 21.6 21V24.6C21.6 25.9 21 26.6 19 26.95C21 27.3 21.6 28 21.6 29.3V32.9C21.6 34.5 22.1 35.3 23.6 35.3H24.8M30.2 18.6H31.4C32.9 18.6 33.4 19.4 33.4 21V24.6C33.4 25.9 34 26.6 36 26.95C34 27.3 33.4 28 33.4 29.3V32.9C33.4 34.5 32.9 35.3 31.4 35.3H30.2" fill="none" stroke="#f07040" stroke-width="2.3"/></svg><div class="t" style="left:1520px;top:65px;font-size:16.5px;color:#c4c4c4;letter-spacing:0.4px">Color Static Set (Static Colors)</div><svg class="abs" style="left:1875px;top:68px" width="12" height="12" viewBox="0 0 12 12"><path d="M0 3H12M0 9H12" stroke="#c4c4c4" stroke-width="1.2"/><rect x="7" y="0" width="2" height="6" fill="#c4c4c4"/><rect x="3" y="6" width="2" height="6" fill="#c4c4c4"/></svg><div class="abs" style="left:1850px;top:94px;width:52px;height:21px;background:#585858;border-radius:3px"></div><div class="t" style="left:1858px;top:96px;font-size:15px;color:#e4e4e4;">Open</div><div class="t" style="left:1487px;top:134px;font-size:15px;color:#8a8a8a;letter-spacing:0.6px">Script</div><div class="abs" style="left:1643px;top:131px;width:260px;height:22px;background:#2e2e2e;border-radius:3px"></div><svg class="abs" style="left:1647px;top:136px" width="11" height="13" viewBox="0 0 11 13"><path d="M0 0H8L11 3V13H0Z" fill="#6d8a78"/></svg><div class="t" style="left:1660px;top:134px;font-size:15px;color:#8c8c8c;letter-spacing:0.5px">StaticColors</div><svg class="abs" style="left:1885px;top:136px" width="12" height="12" viewBox="0 0 12 12"><circle cx="6" cy="6" r="5.2" fill="none" stroke="#8a8a8a" stroke-width="1.2"/><rect x="4.3" y="4.3" width="3.4" height="3.4" fill="#8a8a8a"/></svg><svg class="abs" style="left:1471px;top:163px" width="11" height="10" viewBox="0 0 11 10"><path d="M0 0H11L5.5 10Z" fill="#8a8a8a"/></svg><div class="t" style="left:1488px;top:159px;font-size:15px;color:#d2d2d2;font-weight:bold">Hair Color Set</div><div class="abs" style="left:1847px;top:156px;width:55px;height:23px;background:#2a2a2a;border-radius:3px"></div><div class="t" style="left:1850px;top:159px;font-size:15px;color:#d2d2d2;">5</div><div class="abs" style="left:1486px;top:183px;width:420px;height:132px;background:#414141;border-radius:4px;border:1px solid #2a2a2a"></div><svg class="abs" style="left:1493px;top:196px" width="13" height="6" viewBox="0 0 13 6"><rect x="0" y="0" width="13" height="1.1" fill="#5a5a5a"/><rect x="0" y="4" width="13" height="1.1" fill="#5a5a5a"/></svg><div class="t" style="left:1523px;top:190px;font-size:15px;color:#c4c4c4;letter-spacing:0.35px">Element 0</div><div class="abs" style="left:1645px;top:189px;width:229px;height:17px;background:#5b7f9d;"></div><div class="abs" style="left:1645px;top:205px;width:229px;height:4px;background:#ffffff;"></div><div class="abs" style="left:1874px;top:188px;width:23px;height:22px;background:#3e3e3e;border-radius:3px;border:1px solid #2e2e2e"></div><svg class="abs" style="left:1879px;top:191px" width="15" height="15" viewBox="0 0 15 15"><path d="M2 13L8.5 6.5" stroke="#c8c8c8" stroke-width="3" stroke-linecap="round"/><path d="M2.8 12.2L7.5 7.5" stroke="#3a3a3a" stroke-width="1"/><path d="M6.5 4L11 8.5" stroke="#c8c8c8" stroke-width="2"/><circle cx="11.2" cy="3.8" r="2.6" fill="#c8c8c8"/></svg><svg class="abs" style="left:1493px;top:221px" width="13" height="6" viewBox="0 0 13 6"><rect x="0" y="0" width="13" height="1.1" fill="#5a5a5a"/><rect x="0" y="4" width="13" height="1.1" fill="#5a5a5a"/></svg><div class="t" style="left:1523px;top:215px;font-size:15px;color:#c4c4c4;letter-spacing:0.35px">Element 1</div><div class="abs" style="left:1645px;top:214px;width:229px;height:17px;background:#595959;"></div><div class="abs" style="left:1645px;top:230px;width:229px;height:4px;background:#ffffff;"></div><div class="abs" style="left:1874px;top:213px;width:23px;height:22px;background:#3e3e3e;border-radius:3px;border:1px solid #2e2e2e"></div><svg class="abs" style="left:1879px;top:216px" width="15" height="15" viewBox="0 0 15 15"><path d="M2 13L8.5 6.5" stroke="#c8c8c8" stroke-width="3" stroke-linecap="round"/><path d="M2.8 12.2L7.5 7.5" stroke="#3a3a3a" stroke-width="1"/><path d="M6.5 4L11 8.5" stroke="#c8c8c8" stroke-width="2"/><circle cx="11.2" cy="3.8" r="2.6" fill="#c8c8c8"/></svg><svg class="abs" style="left:1493px;top:246px" width="13" height="6" viewBox="0 0 13 6"><rect x="0" y="0" width="13" height="1.1" fill="#5a5a5a"/><rect x="0" y="4" width="13" height="1.1" fill="#5a5a5a"/></svg><div class="t" style="left:1523px;top:240px;font-size:15px;color:#c4c4c4;letter-spacing:0.35px">Element 2</div><div class="abs" style="left:1645px;top:239px;width:229px;height:17px;background:#6b1628;"></div><div class="abs" style="left:1645px;top:255px;width:229px;height:4px;background:#ffffff;"></div><div class="abs" style="left:1874px;top:238px;width:23px;height:22px;background:#3e3e3e;border-radius:3px;border:1px solid #2e2e2e"></div><svg class="abs" style="left:1879px;top:241px" width="15" height="15" viewBox="0 0 15 15"><path d="M2 13L8.5 6.5" stroke="#c8c8c8" stroke-width="3" stroke-linecap="round"/><path d="M2.8 12.2L7.5 7.5" stroke="#3a3a3a" stroke-width="1"/><path d="M6.5 4L11 8.5" stroke="#c8c8c8" stroke-width="2"/><circle cx="11.2" cy="3.8" r="2.6" fill="#c8c8c8"/></svg><svg class="abs" style="left:1493px;top:271px" width="13" height="6" viewBox="0 0 13 6"><rect x="0" y="0" width="13" height="1.1" fill="#5a5a5a"/><rect x="0" y="4" width="13" height="1.1" fill="#5a5a5a"/></svg><div class="t" style="left:1523px;top:265px;font-size:15px;color:#c4c4c4;letter-spacing:0.35px">Element 3</div><div class="abs" style="left:1645px;top:264px;width:229px;height:17px;background:#c92b38;"></div><div class="abs" style="left:1645px;top:280px;width:229px;height:4px;background:#ffffff;"></div><div class="abs" style="left:1874px;top:263px;width:23px;height:22px;background:#3e3e3e;border-radius:3px;border:1px solid #2e2e2e"></div><svg class="abs" style="left:1879px;top:266px" width="15" height="15" viewBox="0 0 15 15"><path d="M2 13L8.5 6.5" stroke="#c8c8c8" stroke-width="3" stroke-linecap="round"/><path d="M2.8 12.2L7.5 7.5" stroke="#3a3a3a" stroke-width="1"/><path d="M6.5 4L11 8.5" stroke="#c8c8c8" stroke-width="2"/><circle cx="11.2" cy="3.8" r="2.6" fill="#c8c8c8"/></svg><svg class="abs" style="left:1493px;top:296px" width="13" height="6" viewBox="0 0 13 6"><rect x="0" y="0" width="13" height="1.1" fill="#5a5a5a"/><rect x="0" y="4" width="13" height="1.1" fill="#5a5a5a"/></svg><div class="t" style="left:1523px;top:290px;font-size:15px;color:#c4c4c4;letter-spacing:0.35px">Element 4</div><div class="abs" style="left:1645px;top:289px;width:229px;height:17px;background:#b09060;"></div><div class="abs" style="left:1645px;top:305px;width:229px;height:4px;background:#ffffff;"></div><div class="abs" style="left:1874px;top:288px;width:23px;height:22px;background:#3e3e3e;border-radius:3px;border:1px solid #2e2e2e"></div><svg class="abs" style="left:1879px;top:291px" width="15" height="15" viewBox="0 0 15 15"><path d="M2 13L8.5 6.5" stroke="#c8c8c8" stroke-width="3" stroke-linecap="round"/><path d="M2.8 12.2L7.5 7.5" stroke="#3a3a3a" stroke-width="1"/><path d="M6.5 4L11 8.5" stroke="#c8c8c8" stroke-width="2"/><circle cx="11.2" cy="3.8" r="2.6" fill="#c8c8c8"/></svg><div class="abs" style="left:1822px;top:314px;width:70px;height:24px;background:#383838;border:1px solid #2a2a2a;border-top:none;border-radius:0 0 4px 4px"></div><svg class="abs" style="left:1835px;top:320px" width="12" height="12" viewBox="0 0 12 12"><path d="M6 0V12M0 6H12" stroke="#c4c4c4" stroke-width="1.7"/></svg><svg class="abs" style="left:1866px;top:325px" width="12" height="2" viewBox="0 0 12 2"><path d="M0 1H12" stroke="#c4c4c4" stroke-width="1.7"/></svg><svg class="abs" style="left:1471px;top:351px" width="11" height="10" viewBox="0 0 11 10"><path d="M0 0H11L5.5 10Z" fill="#8a8a8a"/></svg><div class="t" style="left:1488px;top:347px;font-size:15px;color:#d2d2d2;font-weight:bold">Eye Color Set</div><div class="abs" style="left:1847px;top:344px;width:55px;height:23px;background:#2a2a2a;border-radius:3px"></div><div class="t" style="left:1850px;top:347px;font-size:15px;color:#d2d2d2;">5</div><div class="abs" style="left:1486px;top:371px;width:420px;height:132px;background:#414141;border-radius:4px;border:1px solid #2a2a2a"></div><svg class="abs" style="left:1493px;top:384px" width="13" height="6" viewBox="0 0 13 6"><rect x="0" y="0" width="13" height="1.1" fill="#5a5a5a"/><rect x="0" y="4" width="13" height="1.1" fill="#5a5a5a"/></svg><div class="t" style="left:1523px;top:378px;font-size:15px;color:#c4c4c4;letter-spacing:0.35px">Element 0</div><div class="abs" style="left:1645px;top:377px;width:229px;height:17px;background:#0090d0;"></div><div class="abs" style="left:1645px;top:393px;width:229px;height:4px;background:#ffffff;"></div><div class="abs" style="left:1874px;top:376px;width:23px;height:22px;background:#3e3e3e;border-radius:3px;border:1px solid #2e2e2e"></div><svg class="abs" style="left:1879px;top:379px" width="15" height="15" viewBox="0 0 15 15"><path d="M2 13L8.5 6.5" stroke="#c8c8c8" stroke-width="3" stroke-linecap="round"/><path d="M2.8 12.2L7.5 7.5" stroke="#3a3a3a" stroke-width="1"/><path d="M6.5 4L11 8.5" stroke="#c8c8c8" stroke-width="2"/><circle cx="11.2" cy="3.8" r="2.6" fill="#c8c8c8"/></svg><svg class="abs" style="left:1493px;top:409px" width="13" height="6" viewBox="0 0 13 6"><rect x="0" y="0" width="13" height="1.1" fill="#5a5a5a"/><rect x="0" y="4" width="13" height="1.1" fill="#5a5a5a"/></svg><div class="t" style="left:1523px;top:403px;font-size:15px;color:#c4c4c4;letter-spacing:0.35px">Element 1</div><div class="abs" style="left:1645px;top:402px;width:229px;height:17px;background:#2aa6dc;"></div><div class="abs" style="left:1645px;top:418px;width:229px;height:4px;background:#ffffff;"></div><div class="abs" style="left:1874px;top:401px;width:23px;height:22px;background:#3e3e3e;border-radius:3px;border:1px solid #2e2e2e"></div><svg class="abs" style="left:1879px;top:404px" width="15" height="15" viewBox="0 0 15 15"><path d="M2 13L8.5 6.5" stroke="#c8c8c8" stroke-width="3" stroke-linecap="round"/><path d="M2.8 12.2L7.5 7.5" stroke="#3a3a3a" stroke-width="1"/><path d="M6.5 4L11 8.5" stroke="#c8c8c8" stroke-width="2"/><circle cx="11.2" cy="3.8" r="2.6" fill="#c8c8c8"/></svg><svg class="abs" style="left:1493px;top:434px" width="13" height="6" viewBox="0 0 13 6"><rect x="0" y="0" width="13" height="1.1" fill="#5a5a5a"/><rect x="0" y="4" width="13" height="1.1" fill="#5a5a5a"/></svg><div class="t" style="left:1523px;top:428px;font-size:15px;color:#c4c4c4;letter-spacing:0.35px">Element 2</div><div class="abs" style="left:1645px;top:427px;width:229px;height:17px;background:#2a9418;"></div><div class="abs" style="left:1645px;top:443px;width:229px;height:4px;background:#ffffff;"></div><div class="abs" style="left:1874px;top:426px;width:23px;height:22px;background:#3e3e3e;border-radius:3px;border:1px solid #2e2e2e"></div><svg class="abs" style="left:1879px;top:429px" width="15" height="15" viewBox="0 0 15 15"><path d="M2 13L8.5 6.5" stroke="#c8c8c8" stroke-width="3" stroke-linecap="round"/><path d="M2.8 12.2L7.5 7.5" stroke="#3a3a3a" stroke-width="1"/><path d="M6.5 4L11 8.5" stroke="#c8c8c8" stroke-width="2"/><circle cx="11.2" cy="3.8" r="2.6" fill="#c8c8c8"/></svg><svg class="abs" style="left:1493px;top:459px" width="13" height="6" viewBox="0 0 13 6"><rect x="0" y="0" width="13" height="1.1" fill="#5a5a5a"/><rect x="0" y="4" width="13" height="1.1" fill="#5a5a5a"/></svg><div class="t" style="left:1523px;top:453px;font-size:15px;color:#c4c4c4;letter-spacing:0.35px">Element 3</div><div class="abs" style="left:1645px;top:452px;width:229px;height:17px;background:#6b1628;"></div><div class="abs" style="left:1645px;top:468px;width:229px;height:4px;background:#ffffff;"></div><div class="abs" style="left:1874px;top:451px;width:23px;height:22px;background:#3e3e3e;border-radius:3px;border:1px solid #2e2e2e"></div><svg class="abs" style="left:1879px;top:454px" width="15" height="15" viewBox="0 0 15 15"><path d="M2 13L8.5 6.5" stroke="#c8c8c8" stroke-width="3" stroke-linecap="round"/><path d="M2.8 12.2L7.5 7.5" stroke="#3a3a3a" stroke-width="1"/><path d="M6.5 4L11 8.5" stroke="#c8c8c8" stroke-width="2"/><circle cx="11.2" cy="3.8" r="2.6" fill="#c8c8c8"/></svg><svg class="abs" style="left:1493px;top:484px" width="13" height="6" viewBox="0 0 13 6"><rect x="0" y="0" width="13" height="1.1" fill="#5a5a5a"/><rect x="0" y="4" width="13" height="1.1" fill="#5a5a5a"/></svg><div class="t" style="left:1523px;top:478px;font-size:15px;color:#c4c4c4;letter-spacing:0.35px">Element 4</div><div class="abs" style="left:1645px;top:477px;width:229px;height:17px;background:#5b7d98;"></div><div class="abs" style="left:1645px;top:493px;width:229px;height:4px;background:#ffffff;"></div><div class="abs" style="left:1874px;top:476px;width:23px;height:22px;background:#3e3e3e;border-radius:3px;border:1px solid #2e2e2e"></div><svg class="abs" style="left:1879px;top:479px" width="15" height="15" viewBox="0 0 15 15"><path d="M2 13L8.5 6.5" stroke="#c8c8c8" stroke-width="3" stroke-linecap="round"/><path d="M2.8 12.2L7.5 7.5" stroke="#3a3a3a" stroke-width="1"/><path d="M6.5 4L11 8.5" stroke="#c8c8c8" stroke-width="2"/><circle cx="11.2" cy="3.8" r="2.6" fill="#c8c8c8"/></svg><div class="abs" style="left:1822px;top:502px;width:70px;height:24px;background:#383838;border:1px solid #2a2a2a;border-top:none;border-radius:0 0 4px 4px"></div><svg class="abs" style="left:1835px;top:508px" width="12" height="12" viewBox="0 0 12 12"><path d="M6 0V12M0 6H12" stroke="#c4c4c4" stroke-width="1.7"/></svg><svg class="abs" style="left:1866px;top:513px" width="12" height="2" viewBox="0 0 12 2"><path d="M0 1H12" stroke="#c4c4c4" stroke-width="1.7"/></svg><div class="t" style="left:1472px;top:833px;font-size:15px;color:#c4c4c4;font-weight:bold;letter-spacing:0.4px">Asset Labels</div><svg class="abs" style="left:1880px;top:862px" width="18" height="18" viewBox="0 0 18 18"><circle cx="10" cy="10" r="9" fill="#2a5aa0"/><path d="M5 7V3H9L15 9L11 13Z" fill="#fff"/><circle cx="7" cy="5" r="1" fill="#2a5aa0"/></svg><div class="t" style="left:1468px;top:891px;font-size:15px;color:#c4c4c4;letter-spacing:0.5px">AssetBundle</div><div class="abs" style="left:1583px;top:889px;width:235px;height:22px;background:#515151;border-radius:3px;border:1px solid #2a2a2a"></div><div class="t" style="left:1587px;top:891px;font-size:15px;color:#e0e0e0;">None</div><svg class="abs" style="left:1801.0px;top:897.0px" width="10" height="6" viewBox="0 0 10 6"><path d="M0 0H10L5.0 6Z" fill="#c4c4c4"/></svg><div class="abs" style="left:1826px;top:889px;width:80px;height:22px;background:#515151;border-radius:3px;border:1px solid #2a2a2a"></div><div class="t" style="left:1830px;top:891px;font-size:15px;color:#e0e0e0;">None</div><svg class="abs" style="left:1887.0px;top:897.0px" width="10" height="6" viewBox="0 0 10 6"><path d="M0 0H10L5.0 6Z" fill="#c4c4c4"/></svg><div class="abs" style="left:0px;top:917px;width:1898px;height:9px;background:#191919;"></div><svg class="abs" style="left:1787px;top:921px" width="13" height="6" viewBox="0 0 13 6"><path d="M1 1L6 5L11 1M6 5V6" fill="none" stroke="#c4c4c4" stroke-width="1.3"/></svg><svg class="abs" style="left:1820px;top:921px" width="16" height="6" viewBox="0 0 16 6"><path d="M1 6C3 2 13 2 15 6Z" fill="#c4c4c4"/></svg><svg class="abs" style="left:1853px;top:921px" width="14" height="6" viewBox="0 0 14 6"><path d="M1 5C4 1 10 1 13 5" fill="none" stroke="#c4c4c4" stroke-width="1.3"/></svg><svg class="abs" style="left:1886px;top:921px" width="12" height="6" viewBox="0 0 12 6"><path d="M1 6C3 2 9 2 11 4" fill="none" stroke="#c4c4c4" stroke-width="1.3"/></svg></body></html>
